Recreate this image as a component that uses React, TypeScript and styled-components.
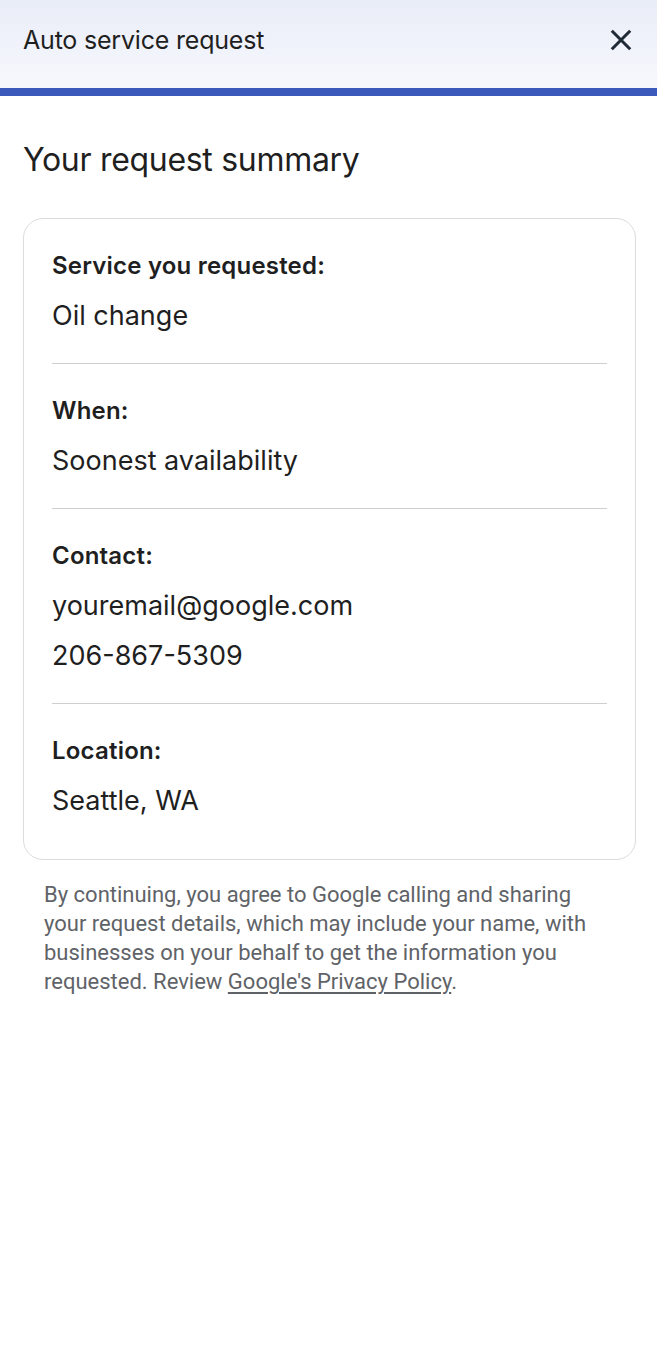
import React from 'react';
import styled, { createGlobalStyle } from 'styled-components';

const GlobalStyle = createGlobalStyle`
  html, body {
    margin: 0;
    padding: 0;
    background: #ffffff;
  }
  body {
    font-family: 'Inter', 'Open Sans', sans-serif;
    color: #202124;
  }
`;

const Page = styled.div`
  width: 657px;
  min-height: 1359px;
  background: #fff;
`;

const Header = styled.header`
  height: 80px;
  display: flex;
  align-items: center;
  justify-content: space-between;
  padding: 0 21px 8px 23px;
  background: linear-gradient(180deg, #e9edf8 0%, #f7f8fd 100%);
  border-bottom: 8px solid #3b59bb;
`;

const HeaderTitle = styled.h1`
  margin: 0;
  font-family: 'Inter', 'Open Sans', sans-serif;
  font-size: 25px;
  font-weight: 400;
  letter-spacing: -0.2px;
  color: #1f1f1f;
`;

const CloseButton = styled.button`
  border: none;
  background: none;
  padding: 0;
  width: 30px;
  height: 30px;
  display: flex;
  align-items: center;
  justify-content: center;
  cursor: pointer;
`;

const Main = styled.main`
  padding: 46px 21px 0 23px;
`;

const Heading = styled.h2`
  margin: 0 0 40px;
  font-family: 'Inter', 'Open Sans', sans-serif;
  font-size: 32px;
  font-weight: 400;
  letter-spacing: -0.3px;
  line-height: 36px;
  color: #1f1f1f;
`;

const Card = styled.section`
  border: 1px solid #dcdcdc;
  border-radius: 20px;
  padding: 0 28px 11px;
`;

const Section = styled.div`
  padding: 33px 0 29px;
  border-bottom: 1px solid #cfcfcf;

  &:last-child {
    border-bottom: none;
  }
`;

const Label = styled.div`
  font-size: 24px;
  font-weight: 600;
  line-height: 28px;
  letter-spacing: 0.2px;
  color: #1f1f1f;
  margin-bottom: 18px;
`;

const Value = styled.div`
  font-size: 27px;
  font-weight: 400;
  line-height: 36px;
  color: #1f1f1f;

  & + & {
    margin-top: 14px;
  }
`;

const Disclaimer = styled.p`
  margin: 20px 40px 0 21px;
  font-family: 'Roboto', sans-serif;
  font-size: 22px;
  line-height: 29px;
  color: #5f6368;
`;

const PolicyLink = styled.a`
  color: #5f6368;
  text-decoration: underline;
  text-underline-offset: 3px;
`;

const sections: { label: string; values: string[] }[] = [
  { label: 'Service you requested:', values: ['Oil change'] },
  { label: 'When:', values: ['Soonest availability'] },
  { label: 'Contact:', values: ['youremail@google.com', '206-867-5309'] },
  { label: 'Location:', values: ['Seattle, WA'] },
];

const App: React.FC = () => {
  return (
    <Page>
      <GlobalStyle />
      <Header>
        <HeaderTitle>Auto service request</HeaderTitle>
        <CloseButton aria-label="Close">
          <svg width="26" height="26" viewBox="0 0 24 24">
            <path d="M3.5 3.5 L20.5 20.5 M20.5 3.5 L3.5 20.5" stroke="#1f2a36" strokeWidth="2.8" fill="none" />
          </svg>
        </CloseButton>
      </Header>
      <Main>
        <Heading>Your request summary</Heading>
        <Card>
          {sections.map((s) => (
            <Section key={s.label}>
              <Label>{s.label}</Label>
              {s.values.map((v) => (
                <Value key={v}>{v}</Value>
              ))}
            </Section>
          ))}
        </Card>
        <Disclaimer>
          By continuing, you agree to Google calling and sharing your request details, which may
          include your name, with businesses on your behalf to get the information you requested.
          Review <PolicyLink href="#">Google's Privacy Policy</PolicyLink>.
        </Disclaimer>
      </Main>
    </Page>
  );
};

export default App;
